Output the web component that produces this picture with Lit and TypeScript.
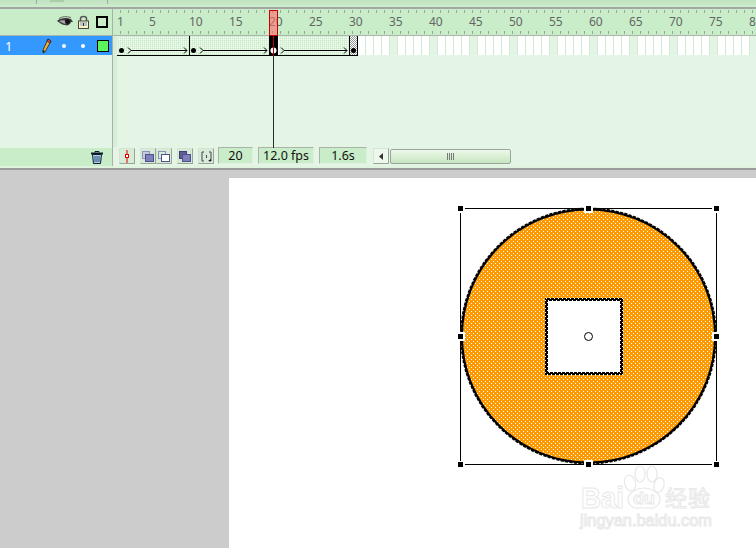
import { LitElement, html, css, svg } from "lit";
import { customElement } from "lit/decorators.js";

const FRAMES = Array.from({ length: 80 }, (_, i) => i + 1);
const EMPTY = FRAMES.filter((n) => n > 30);

const eye = svg`<svg class="ic" width="16" height="12" viewBox="0 0 16 12"><path d="M0 5C3 2 7 2 10 2l4 1 2 3-2 0c-1 3-4 4-6 3C5 9 3 7 0 5z" fill="#3a3a3a"/><path d="M2 5c3-1 5-1 7 0-1 2-1 3 1 3-3 0-5-1-8-3z" fill="#a8a8a8"/><ellipse cx="10.500" cy="5.500" rx="2.500" ry="2.200" fill="#111"/><path d="M2 2.500C5 .5 9 0 14 1.500" stroke="#666" fill="none"/></svg>`;
const lock = svg`<svg class="ic" width="11" height="14" viewBox="0 0 11 14"><path d="M2.500 6V3.500C2.500 .8 8.500 .8 8.500 3.500V6" fill="none" stroke="#555" stroke-width="1.500"/><rect x=".5" y="6" width="10" height="7.500" fill="#fbf2c4" stroke="#444"/><path d="M2 8h7M2 10h7" stroke="#7f97c4"/><path d="M5.500 8v3" stroke="#333"/></svg>`;
const pencil = svg`<svg class="ic" width="10" height="16" viewBox="0 0 10 16"><path d="M6 1l3 2-6 11-2 1 0-3z" fill="#f5b030" stroke="#222" stroke-width=".8"/><path d="M6 1l3 2-1 2-3-2z" fill="#e05050" stroke="#222" stroke-width=".8"/><path d="M1 15l0-3 2 1z" fill="#222"/></svg>`;
const trash = svg`<svg class="ic" width="12" height="13" viewBox="0 0 12 13"><path d="M0 2.500h12" stroke="#0c1c2c" stroke-width="2"/><path d="M4 1.500V.5h4v1" stroke="#0c1c2c" fill="none"/><path d="M1.500 3.500h9l-1 9h-7z" fill="#b8d0e8" stroke="#0c1c2c"/><path d="M4 5v6M6 5v6M8 5v6" stroke="#1c4f80"/></svg>`;

const tween = svg`<svg class="tween" width="241" height="20" viewBox="117 36 241 20" shape-rendering="crispEdges">
  <defs><pattern id="tw" width="2" height="2" patternUnits="userSpaceOnUse"><rect width="2" height="2" fill="#dff5df"/><rect width="1" height="1" fill="#c4eac6"/><rect x="1" y="1" width="1" height="1" fill="#f0faef"/></pattern>
  <pattern id="kf" width="2" height="2" patternUnits="userSpaceOnUse"><rect width="2" height="2" fill="#fff"/><rect width="1" height="1" fill="#999"/><rect x="1" y="1" width="1" height="1" fill="#999"/></pattern></defs>
  <rect x="118" y="36" width="240" height="19" fill="url(#tw)"/>
  <rect x="350" y="36" width="7" height="19" fill="url(#kf)"/>
  <path d="M189.500 36v19M349.500 36v19M357.500 36v19M117 55.500h241" stroke="#000" fill="none"/>
  <rect x="269" y="36" width="9" height="20" fill="#000"/>
  <rect x="278" y="36" width="1" height="19" fill="#fff"/>
  <g shape-rendering="auto">
    <circle cx="121.500" cy="50.500" r="2.500"/><circle cx="193.500" cy="50.500" r="2.500"/><circle cx="353.500" cy="50.500" r="2.500"/>
    <ellipse cx="273.500" cy="50.500" rx="3" ry="3" fill="#fff"/><path d="M273.500 47v7" stroke="#000"/>
    ${[[128, 187], [200, 267], [281, 347]].map(([a, b]) => svg`<path d="M${a} 47.500l3 3-3 3M${a + 3} 50.500H${b}M${b - 3} 47.500l3 3-3 3" fill="none" stroke="#000"/>`)}
  </g>
</svg>`;

const stage = svg`<svg class="art" width="527" height="370" viewBox="229 178 527 370">
  <defs>
    <pattern id="dots" width="4" height="4" patternUnits="userSpaceOnUse" shape-rendering="crispEdges"><rect width="4" height="4" fill="#ff9900" shape-rendering="crispEdges"/><rect x="1" y="1" width="1" height="1" fill="#ffffff" shape-rendering="crispEdges"/><rect x="3" y="3" width="1" height="1" fill="#ffffff" shape-rendering="crispEdges"/></pattern>
  </defs>
  <path fill-rule="evenodd" fill="url(#dots)" d="M461 336a127.500 127.500 0 1 0 255 0a127.500 127.500 0 1 0 -255 0zM545 298v77h78v-77z"/>
  <circle cx="588.500" cy="336" r="127" fill="none" stroke="#000" stroke-width="3"/>
  <circle cx="588.500" cy="336" r="128.200" fill="none" stroke="#fff" stroke-width="1.200" stroke-dasharray="1.500 3"/>
  <g shape-rendering="crispEdges" fill="none">
    <rect x="546.500" y="299.500" width="75" height="74" stroke="#000" stroke-width="3"/>
    <rect x="545.500" y="298.500" width="77" height="76" stroke="#fff" stroke-dasharray="1 3"/>
    <rect x="547.500" y="300.500" width="73" height="72" stroke="#fff" stroke-dasharray="1 3"/>
  </g>
  <g shape-rendering="crispEdges">
    <path d="M465 208.500h119M593 208.500h119M460.500 213v118M460.500 341v120M716.500 213v118M716.500 341v120M465 464.500h119M593 464.500h119" stroke="#000" fill="none"/>
    ${[[588, 208], [460, 336], [716, 336], [588, 464]].map(([x, y]) => svg`<rect x="${x - 4}" y="${y - 4}" width="9" height="9" fill="#fff"/>`)}
    ${[[460, 208], [588, 208], [716, 208], [460, 336], [716, 336], [460, 464], [588, 464], [716, 464]].map(([x, y]) => svg`<rect x="${x - 2}" y="${y - 2}" width="5" height="5" fill="#000"/>`)}
  </g>
  <circle cx="588.500" cy="336.500" r="4" fill="#fff" stroke="#000"/>
  <g class="wm">
    <text x="581" y="508" font-size="30" font-weight="700" textLength="43" lengthAdjust="spacingAndGlyphs">Bai</text>
    <text x="633" y="504" font-size="17" font-weight="700" textLength="22" lengthAdjust="spacingAndGlyphs">du</text>
    <text x="665" y="506" font-size="22" class="cjk" textLength="45">经验</text>
    <text x="580" y="526" font-size="16" textLength="132" lengthAdjust="spacingAndGlyphs">jingyan.baidu.com</text>
    <g fill="none" stroke="#e8e8e8" stroke-width="1.200">
      <ellipse cx="630" cy="483" rx="5.500" ry="8" transform="rotate(-15 630 483)"/>
      <ellipse cx="640" cy="474" rx="5" ry="8"/>
      <ellipse cx="652" cy="474" rx="5" ry="8"/>
      <ellipse cx="659" cy="485" rx="5" ry="7.500" transform="rotate(15 659 485)"/>
      <path d="M628 499c0-6 9-11 16-11s16 5 16 11c0 6-5 10-11 9h-10c-6 1-11-3-11-9z"/>
    </g>
  </g>
</svg>`;

@customElement("app-root")
export class AppRoot extends LitElement {
  static styles = css`
    :host { display: block; width: 756px; height: 548px; overflow: hidden; font-family: "Noto Sans", "Open Sans", sans-serif; }
    .ic { display: block; flex: none; }
    .timeline { position: relative; height: 170px; background: #e4f5e6; box-sizing: border-box; }
    .strip { height: 7px; background: linear-gradient(#c0e2c0, #cdeccd); display: flex; padding-left: 36px; border-bottom: 2px solid #a3a6a3; box-sizing: content-box; }
    .strip i { width: 1px; height: 4px; background: #9aa; }
    .strip b { width: 14px; height: 2px; margin-left: 13px; background: #aacdaa; }
    .gap-b { margin-left: 43px; }
    .head { height: 26px; display: flex; background: #c9edc9; border-bottom: 1px solid #a9b5a9; }
    .head-left { width: 112px; flex: none; display: flex; align-items: center; border-right: 1px solid #a8b0a8; box-sizing: content-box; }
    .head-left .ic:nth-child(1) { margin-left: 57px; }
    .head-left .ic:nth-child(2) { margin-left: 5px; }
    .sq { width: 12px; height: 12px; border: 2px solid #000; box-sizing: border-box; margin-left: 7px; }
    .ruler { flex: 1; display: flex; padding-left: 3px; overflow: hidden;
      background-image: linear-gradient(90deg, #96a696 1px, transparent 1px), linear-gradient(90deg, #96a696 1px, transparent 1px);
      background-size: 8px 3px; background-repeat: repeat-x; background-position: 7px 1px, 7px 22px; }
    .tick { width: 8px; flex: none; font-size: 12px; line-height: 26px; color: #666; white-space: nowrap; padding-left: 1px; box-sizing: border-box; }
    .row { height: 20px; display: flex; }
    .layer { width: 112px; flex: none; height: 19px; background: #3399ff; color: #fff; display: flex; align-items: center; font-size: 13px; }
    .layer .num { width: 42px; padding-left: 5px; box-sizing: border-box; }
    .dot { width: 4px; height: 4px; border-radius: 50%; background: #fff; flex: none; }
    .dot.a { margin-left: 10px; }
    .dot.b { margin-left: 15px; }
    .swatch { width: 12px; height: 12px; background: #5cf55c; border: 1px solid #000; box-sizing: border-box; margin-left: 12px; }
    .gut { width: 5px; flex: none; border-left: 1px solid #a8b0a8; box-sizing: border-box; background: #d7eed9; }
    .tween { display: block; flex: none; }
    .cell { width: 8px; height: 19px; flex: none; background: #fff; border-right: 1px solid #d3e9d7; box-sizing: border-box; }
    .cell.fifth { background: #e2f4e4; }
    .body { height: 91px; display: flex; }
    .body .l { width: 112px; flex: none; }
    .body .g { width: 5px; flex: none; border-left: 1px solid #a8b0a8; box-sizing: border-box; background: #d7eed9; }
    .status { height: 19px; display: flex; background: #e4f5e6; font-size: 12.500px; color: #111; }
    .st-left { width: 112px; height: 18px; margin-top: 1px; flex: none; background: #c9edc9; display: flex; justify-content: flex-end; align-items: center; padding-right: 9px; box-sizing: border-box; }
    .st-right { flex: 1; display: flex; align-items: flex-start; padding-left: 6px; border-left: 1px solid #a8b0a8; height: 19px; }
    .btn { width: 16px; height: 16px; margin-top: 1px; box-sizing: border-box; border: 1px solid #d6e4d6; border-right-color: #9aa59a; border-bottom-color: #9aa59a; background: #d7ebd9; display: flex; align-items: center; justify-content: center; flex: none; }
    .field { height: 17px; box-sizing: border-box; border: 1px solid #a9b3a9; border-right-color: #dff0df; border-bottom-color: #dff0df; background: #c9edc9; text-align: center; line-height: 15px; flex: none; }
    .f20 { width: 35px; }
    .ffps { width: 56px; }
    .ftime { width: 48px; }
    .m1 { margin-left: 5px; }
    .m0 { margin-left: 4px; }
    .scroll-arrow { margin-left: 6px; background: #eef7ec; }
    .thumb { width: 121px; height: 15px; margin: 2px 0 0 1px; box-sizing: border-box; border: 1px solid #9aa59a; border-radius: 2px; background: linear-gradient(#edf8ea, #c6e6bf); display: flex; align-items: center; justify-content: center; gap: 1px; }
    .thumb i { width: 1px; height: 7px; background: #777; }
    .foot { height: 2px; background: #dff3df; }
    .sep { height: 2px; background: #9a9c9a; }
    .playhead { position: absolute; left: 269px; top: 10px; width: 9px; height: 26px; box-sizing: border-box; border: 1px solid #c80000; background: #ff6a6a99; }
    .needle { position: absolute; left: 273px; top: 36px; width: 1px; height: 112px; background: #2a2a2a; }
    .needle::before { content: ""; position: absolute; left: 0; top: 0; width: 1px; height: 20px; background: #b00000; }
    .stage { height: 378px; background: #cccccc; padding: 8px 0 0 229px; box-sizing: border-box; }
    .canvas { background: #fff; height: 370px; }
    .art { display: block; }
    .wm text { fill: #fff; stroke: #e8e8e8; stroke-width: 1; font-family: "Liberation Sans", sans-serif; }
    .wm text.cjk { font-family: "Noto Sans CJK SC", sans-serif; }
  `;

  render() {
    return html`
      <div class="timeline">
        <div class="strip"><i></i><b></b><i class="gap-b"></i></div>
        <div class="head">
          <div class="head-left">${eye}${lock}<div class="sq"></div></div>
          <div class="ruler">
            ${FRAMES.map((n) => html`<div class="tick">${n === 1 || n % 5 === 0 ? n : ""}</div>`)}
          </div>
        </div>
        <div class="row">
          <div class="layer"><span class="num">1</span>${pencil}<span class="dot a"></span><span class="dot b"></span><span class="swatch"></span></div>
          <div class="gut"></div>
          ${tween}
          ${EMPTY.map((n) => html`<div class="cell ${n % 5 === 0 ? "fifth" : ""}"></div>`)}
        </div>
        <div class="body"><div class="l"></div><div class="g"></div></div>
        <div class="status">
          <div class="st-left">${trash}</div>
          <div class="st-right">
            <div class="btn"><svg width="6" height="13" viewBox="0 0 6 13"><path d="M3 0v13" stroke="#e00000"/><rect x="1.500" y="4.500" width="3" height="3" fill="#fff" stroke="#e00000"/></svg></div>
            <div class="btn m1"><svg width="12" height="11" viewBox="0 0 12 11"><rect x=".5" y=".5" width="7" height="7" fill="#c4cbdc" stroke="#8a90b8"/><rect x="3.500" y="3.500" width="8" height="7" fill="#8080b8" stroke="#505090"/></svg></div>
            <div class="btn"><svg width="12" height="11" viewBox="0 0 12 11"><rect x=".5" y=".5" width="7" height="7" fill="none" stroke="#8a90b8"/><rect x="3.500" y="3.500" width="8" height="7" fill="#fff" stroke="#505090"/></svg></div>
            <div class="btn m1"><svg width="12" height="11" viewBox="0 0 12 11"><rect x=".5" y=".5" width="7" height="7" fill="#606090" stroke="#404070"/><rect x="3.500" y="3.500" width="8" height="7" fill="#8080b8" stroke="#505090"/></svg></div>
            <div class="btn m1"><svg width="11" height="11" viewBox="0 0 11 11"><path d="M3 1H1v9h2M8 1h2v9H8M5.500 4v3" fill="none" stroke="#445"/><path d="M7 10h3V8z" fill="#111"/></svg></div>
            <div class="field m0 f20">20</div>
            <div class="field m1 ffps">12.0 fps</div>
            <div class="field m1 ftime">1.6s</div>
            <div class="btn scroll-arrow"><svg width="5" height="7" viewBox="0 0 5 7"><path d="M4 0v7L0 3.500z" fill="#333"/></svg></div>
            <div class="thumb"><i></i><i></i><i></i><i></i></div>
          </div>
        </div>
        <div class="foot"></div>
        <div class="sep"></div>
        <div class="playhead"></div>
        <div class="needle"></div>
      </div>
      <div class="stage"><div class="canvas">${stage}</div></div>
    `;
  }
}
